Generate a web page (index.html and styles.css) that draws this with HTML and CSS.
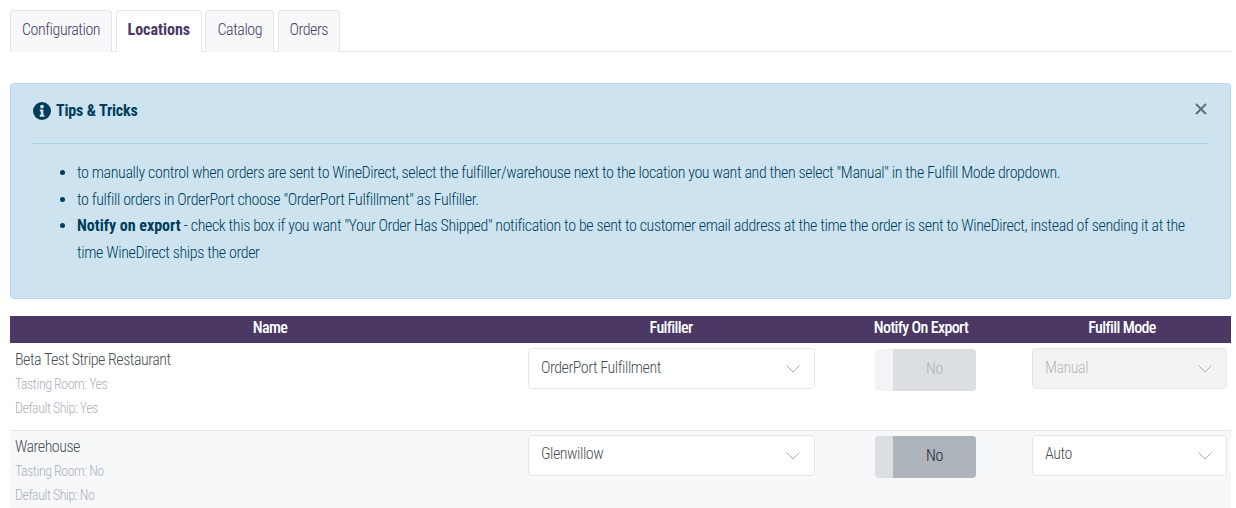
FILE: index.html
```html
<!DOCTYPE html>
<html>
  <head>
    <meta charset="utf-8">
    <title>Locations</title>
    <link rel="stylesheet" href="styles.css">
  </head>
  <body>
    <ul class="tabs">
      <li class="tab">Configuration</li>
      <li class="tab active">Locations</li>
      <li class="tab">Catalog</li>
      <li class="tab">Orders</li>
    </ul>

    <div class="tips">
      <div class="tips-head">
        <svg class="tips-icon" viewBox="0 0 18 18">
          <circle cx="9" cy="9" r="9" fill="#003d5c"/>
          <circle cx="9" cy="4.6" r="1.9" fill="#cde4f0"/>
          <path d="M6.8 7.6h3.6v5.2h1v1.9H6.8v-1.9h1v-3.3h-1z" fill="#cde4f0"/>
        </svg>
        <span class="tips-title">Tips &amp; Tricks</span>
        <svg class="tips-close" viewBox="0 0 12 12">
          <path d="M1 1l10 10M11 1L1 11" stroke="#5f6f7a" stroke-width="2" fill="none"/>
        </svg>
      </div>
      <ul class="tips-list">
        <li>to manually control when orders are sent to WineDirect, select the fulfiller/warehouse next to the location you want and then select "Manual" in the Fulfill Mode dropdown.</li>
        <li>to fulfill orders in OrderPort choose "OrderPort Fulfillment" as Fulfiller.</li>
        <li><b>Notify on export</b> - check this box if you want "Your Order Has Shipped" notification to be sent to customer email address at the time the order is sent to WineDirect, instead of sending it at the time WineDirect ships the order</li>
      </ul>
    </div>

    <div class="grid-head">
      <div>Name</div>
      <div>Fulfiller</div>
      <div>Notify On Export</div>
      <div>Fulfill Mode</div>
    </div>

    <div class="row">
      <div class="loc">
        <div class="loc-name">Beta Test Stripe Restaurant</div>
        <div class="loc-meta">Tasting Room: Yes</div>
        <div class="loc-meta">Default Ship: Yes</div>
      </div>
      <div class="select">OrderPort Fulfillment
        <svg class="caret" viewBox="0 0 14 8"><path d="M.5.5L7 7l6.5-6.5" stroke="#a9b0b6" fill="none"/></svg>
      </div>
      <div class="toggle disabled"><span class="toggle-off">No</span></div>
      <div class="select disabled">Manual
        <svg class="caret" viewBox="0 0 14 8"><path d="M.5.5L7 7l6.5-6.5" stroke="#a9b0b6" fill="none"/></svg>
      </div>
    </div>

    <div class="row alt">
      <div class="loc">
        <div class="loc-name">Warehouse</div>
        <div class="loc-meta">Tasting Room: No</div>
        <div class="loc-meta">Default Ship: No</div>
      </div>
      <div class="select">Glenwillow
        <svg class="caret" viewBox="0 0 14 8"><path d="M.5.5L7 7l6.5-6.5" stroke="#a9b0b6" fill="none"/></svg>
      </div>
      <div class="toggle"><span class="toggle-off">No</span></div>
      <div class="select">Auto
        <svg class="caret" viewBox="0 0 14 8"><path d="M.5.5L7 7l6.5-6.5" stroke="#a9b0b6" fill="none"/></svg>
      </div>
    </div>
  </body>
</html>
```

FILE: styles.css
```css
* {margin: 0;padding: 0;box-sizing: border-box;}
ul {list-style: none;}
html, body {height: 100%;overflow: hidden;}
body {
  padding: 10px 5px 0 10px;
  font-family: "Roboto", "Liberation Sans", sans-serif;
  font-stretch: 75%;
  font-size: 16px;
  font-weight: 350;
  letter-spacing: -.385px;
  color: #4a4f54;
  background: #fff;
}
b {letter-spacing: 0;}

.tabs {
  display: flex;
  gap: 3.4px;
  height: 42px;
  border-bottom: 1px solid #e4e7ea;
}
.tab {
  height: 42px;
  padding: 9px 11px 0;
  letter-spacing: -.45px;
  color: #4b3864;
  background: #f7f8fa;
  border: 1px solid #e4e7ea;
  border-bottom: 0;
  border-radius: 4px 4px 0 0;
}
.tab.active {
  background: #fff;
  font-weight: 700;
  letter-spacing: 0;
}

.tips {
  height: 216px;
  margin-top: 31px;
  padding: 0 22px;
  color: #003d5c;
  background: #cde4f0;
  border: 1px solid #b8d8e8;
  border-radius: 4px;
}
.tips-head {
  display: flex;
  align-items: center;
  height: 60px;
  border-bottom: 1px solid #a9cfe2;
}
.tips-icon {width: 18px;height: 18px;margin-right: 5px;margin-top: -6px;}
.tips-title {font-weight: 700;letter-spacing: -.17px;margin-top: -6px;}
.tips-close {width: 12px;height: 12px;margin-left: auto;margin-right: 1px;margin-top: -10px;}
.tips-list {
  list-style: disc;
  margin-top: 16px;
  padding-left: 44px;
  line-height: 26.5px;
}

.grid-head {
  display: grid;
  grid-template-columns: 520px 282px 218px 184px;
  height: 27px;
  margin-top: 17px;
  color: #fff;
  background: #4b3864;
  font-weight: 500;
  letter-spacing: -.65px;
  line-height: 23px;
  text-align: center;
}

.row {
  display: grid;
  grid-template-columns: 518px 287px 217px 195px;
  align-items: start;
  height: 86px;
  margin-top: 1px;
  padding-top: 4px;
}
.row.alt {
  height: 78px;
  margin-top: 0;
  background: #f7f8fa;
  border-top: 1px solid #e4e7ea;
}
.loc {padding-left: 5px;}
.loc-name {line-height: 24px;height: 25px;letter-spacing: -.5px;}
.loc-meta {line-height: 23.5px;font-size: 14px;letter-spacing: -.5px;color: #abb2bb;}

.select {
  position: relative;
  height: 41px;
  padding: 0 12px;
  line-height: 37px;
  letter-spacing: -.46px;
  background: #fff;
  border: 1px solid #e4e7ea;
  border-radius: 4px;
}
.row.alt .select {line-height: 35px;}
.select.disabled {color: #b4b8bd;background: #f3f3f4;}
.caret {position: absolute;right: 14px;top: 16px;width: 14px;height: 8px;}

.toggle {
  width: 101px;
  height: 42px;
  margin-left: 60px;
  margin-top: 1px;
  padding-left: 18px;
  background: #dcdfe2;
  border-radius: 4px;
  overflow: hidden;
}
.toggle-off {
  display: block;
  height: 100%;
  text-align: center;
  line-height: 40px;
  color: #23272b;
  background: #adb4bb;
}
.toggle.disabled {background: #f3f4f5;}
.toggle.disabled .toggle-off {color: #adb2b7;background: #dcdfe2;}
```
